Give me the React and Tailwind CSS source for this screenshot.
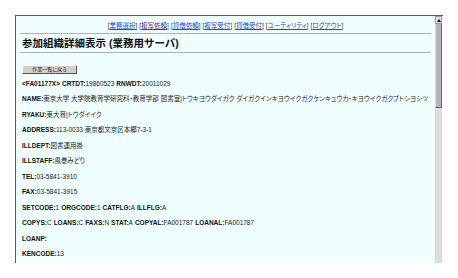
const navLinks = [
  { label: "業務選択" },
  { label: "複写依頼", visited: true },
  { label: "貸借依頼" },
  { label: "複写受付" },
  { label: "貸借受付" },
  { label: "ユーティリティ" },
  { label: "ログアウト" },
];

const fields = [
  [
    ["<FA01177X>", ""],
    ["CRTDT:", "19860523"],
    ["RNWDT:", "20011029"],
  ],
  [["NAME:", "東京大学 大学院教育学研究科・教育学部 図書室|トウキヨウダイガク ダイガクインキヨウイクガクケンキュウカ・キヨウイクガクブトシヨシツ"]],
  [["RYAKU:", "東大育|トウダイイク"]],
  [["ADDRESS:", "113-0033 東京都文京区本郷7-3-1"]],
  [["ILLDEPT:", "図書運用掛"]],
  [["ILLSTAFF:", "風巻みどり"]],
  [["TEL:", "03-5841-3910"]],
  [["FAX:", "03-5841-3915"]],
  [
    ["SETCODE:", "1"],
    ["ORGCODE:", "1"],
    ["CATFLG:", "A"],
    ["ILLFLG:", "A"],
  ],
  [
    ["COPYS:", "C"],
    ["LOANS:", "C"],
    ["FAXS:", "N"],
    ["STAT:", "A"],
    ["COPYAL:", "FA001787"],
    ["LOANAL:", "FA001787"],
  ],
  [["LOANP:", ""]],
  [["KENCODE:", "13"]],
];

const Rule = () => (
  <div className="h-[2px] border-t border-[#a8b4b4] border-b border-b-white" />
);

export default function App() {
  return (
    <div className="w-[458px] h-[278px] bg-white pt-[15px] pl-[15px] font-['Liberation_Sans','Noto_Sans_CJK_JP',sans-serif]">
      <div className="flex w-[428px] h-[248px] border-l border-t border-[#5a5a5a]">
        {/* page body */}
        <div className="flex-1 bg-[#effefe] overflow-hidden pl-[4px] pr-[4px] text-[#222] text-[6.5px] leading-none [font-feature-settings:'palt']">
          <div className="h-[17px] pt-[7px] flex justify-center gap-[2px] whitespace-nowrap">
            {navLinks.map((l) => (
              <span key={l.label} className="text-[#333]">
                [
                <span className={l.visited ? "underline text-[#6a2a8a]" : "underline text-[#2c46c8]"}>
                  {l.label}
                </span>
                ]
              </span>
            ))}
          </div>
          <Rule />
          <div className="h-[17px] flex items-center pl-[2px] text-[10.5px] font-bold text-[#111] whitespace-nowrap [font-feature-settings:normal]">
            参加組織詳細表示 (業務用サーバ)
          </div>
          <Rule />
          <div className="pt-[11px] pl-[2px]">
            <button className="h-[9px] w-[55px] bg-[#d4d0c8] border border-t-white border-l-white border-r-[#555] border-b-[#555] text-[5px] text-[#222] flex items-center justify-center">
              作業一覧に戻る
            </button>
          </div>
          <div className="pt-[2px] pl-[2px] flex flex-col">
            {fields.map((row, i) => (
              <div key={i} className="h-[15.5px] flex items-center whitespace-nowrap">
                {row.map(([k, v], j) => (
                  <span key={j} className={j > 0 ? "ml-[2px]" : ""}>
                    <b className="font-bold text-[#111]">{k}</b>
                    {v}
                  </span>
                ))}
              </div>
            ))}
          </div>
        </div>
        {/* scrollbar */}
        <div className="w-[8px] flex flex-col bg-[#dcdcdc] border-r border-r-white">
          <div className="h-[8px] bg-[#e4e4e4] border border-[#999] flex items-center justify-center">
            <svg width="4" height="3" viewBox="0 0 4 3">
              <path d="M2 0 L4 3 L0 3 Z" fill="#111" />
            </svg>
          </div>
          <div className="h-[84px] bg-[#b4b4b4] border-r border-b border-[#666] border-l border-l-[#ddd]" />
        </div>
      </div>
    </div>
  );
}
